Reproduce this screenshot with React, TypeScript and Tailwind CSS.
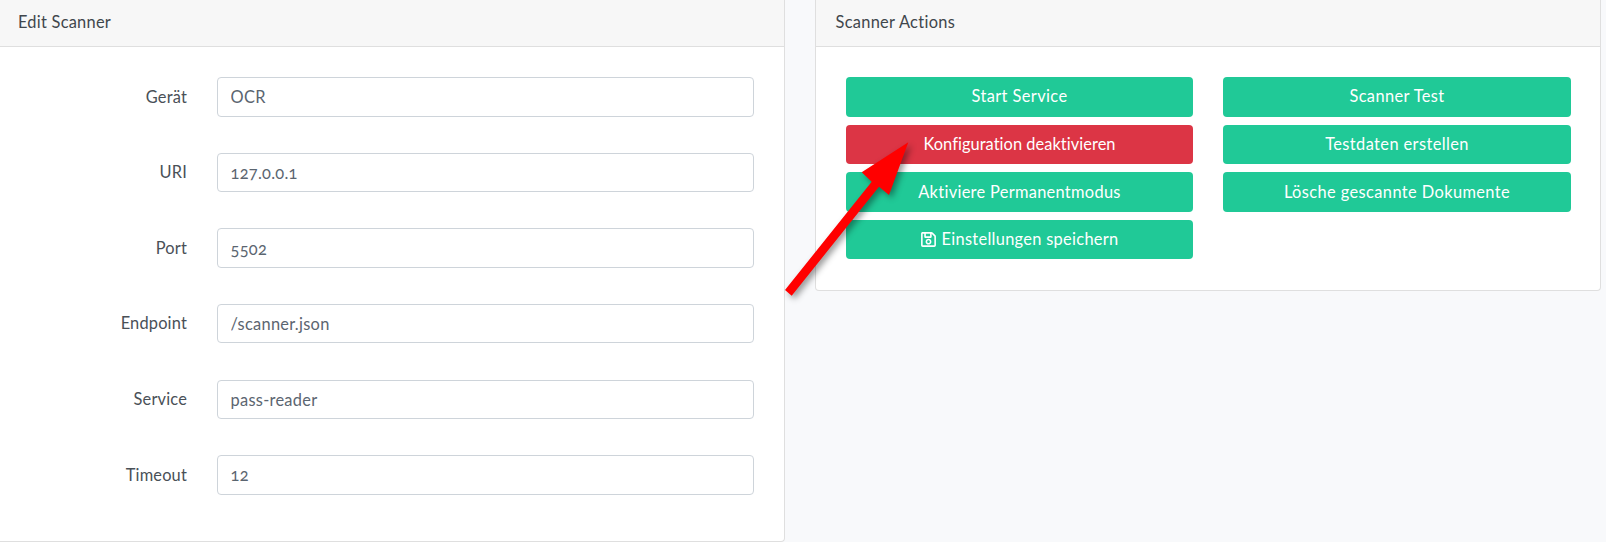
import { FaRegSave } from "react-icons/fa";

const fields = [
  ["Gerät", "OCR"],
  ["URI", "127.0.0.1"],
  ["Port", "5502"],
  ["Endpoint", "/scanner.json"],
  ["Service", "pass-reader"],
  ["Timeout", "12"],
];

const green = "flex h-[39.6px] w-full items-center justify-center rounded-[4px] bg-[#20c997] text-white";

export default function App() {
  return (
    <div className="relative flex h-[542px] w-[1606px] gap-[30px] overflow-hidden bg-[#f8f9fb] text-[16.4px] text-[#495057] [font-family:Lato,sans-serif] tracking-[0.4px]">
      <section className="h-[542px] w-[785px] shrink-0 rounded-br-[4px] border-r border-b border-[#dfdfdf] bg-white">
        <header className="flex h-[47px] items-center border-b border-[#dfdfdf] bg-[#f7f7f7] pb-[2px] pl-[18px] tracking-[0.25px] text-[#3f464c]">Edit Scanner</header>
        <div className="flex flex-col gap-[36.2px] pt-[30.3px]">
          {fields.map(([label, value]) => (
            <div key={label} className="flex items-center">
              <label className="w-[187px] text-right tracking-[0.18px]">{label}</label>
              <input
                readOnly
                value={value}
                className="ml-[30px] h-[39.4px] w-[537px] rounded-[4px] border border-[#ced4da] bg-white px-[12.5px] oldstyle-nums tracking-[0.28px] text-[#5b6570] outline-none"
              />
            </div>
          ))}
        </div>
      </section>

      <section className="h-[291px] w-[786px] shrink-0 rounded-b-[4px] border-x border-b border-[#dfdfdf] bg-white">
        <header className="flex h-[47px] items-center border-b border-[#dfdfdf] bg-[#f7f7f7] pb-[2px] pl-[19.5px] tracking-[0.3px] text-[#3f464c]">Scanner Actions</header>
        <div className="flex gap-[30px] pl-[30px] pt-[30px]">
          <div className="flex w-[347px] flex-col gap-[8px]">
            <button className={green}>Start Service</button>
            <button className="flex h-[39.6px] w-full items-center justify-center rounded-[4px] bg-[#dc3545] tracking-[0.05px] text-white">Konfiguration deaktivieren</button>
            <button className={`${green} tracking-[0.3px]`}>Aktiviere Permanentmodus</button>
            <button className={`${green} tracking-[0.3px]`}>
              <FaRegSave className="mr-[4px] text-[17px]" />
              Einstellungen speichern
            </button>
          </div>
          <div className="flex w-[348px] flex-col gap-[8px]">
            <button className={green}>Scanner Test</button>
            <button className={green}>Testdaten erstellen</button>
            <button className={green}>Lösche gescannte Dokumente</button>
          </div>
        </div>
      </section>

      <svg className="pointer-events-none absolute left-0 top-0 h-[542px] w-[1606px] [filter:drop-shadow(3px_3px_3px_rgba(0,0,0,0.4))]" viewBox="0 0 1606 542">
        <polygon points="908.3,142.3 889,195 879,186.7 791.7,295.7 785,290 871.7,181.7 861.7,172.3" fill="#ff0000" />
      </svg>
    </div>
  );
}
